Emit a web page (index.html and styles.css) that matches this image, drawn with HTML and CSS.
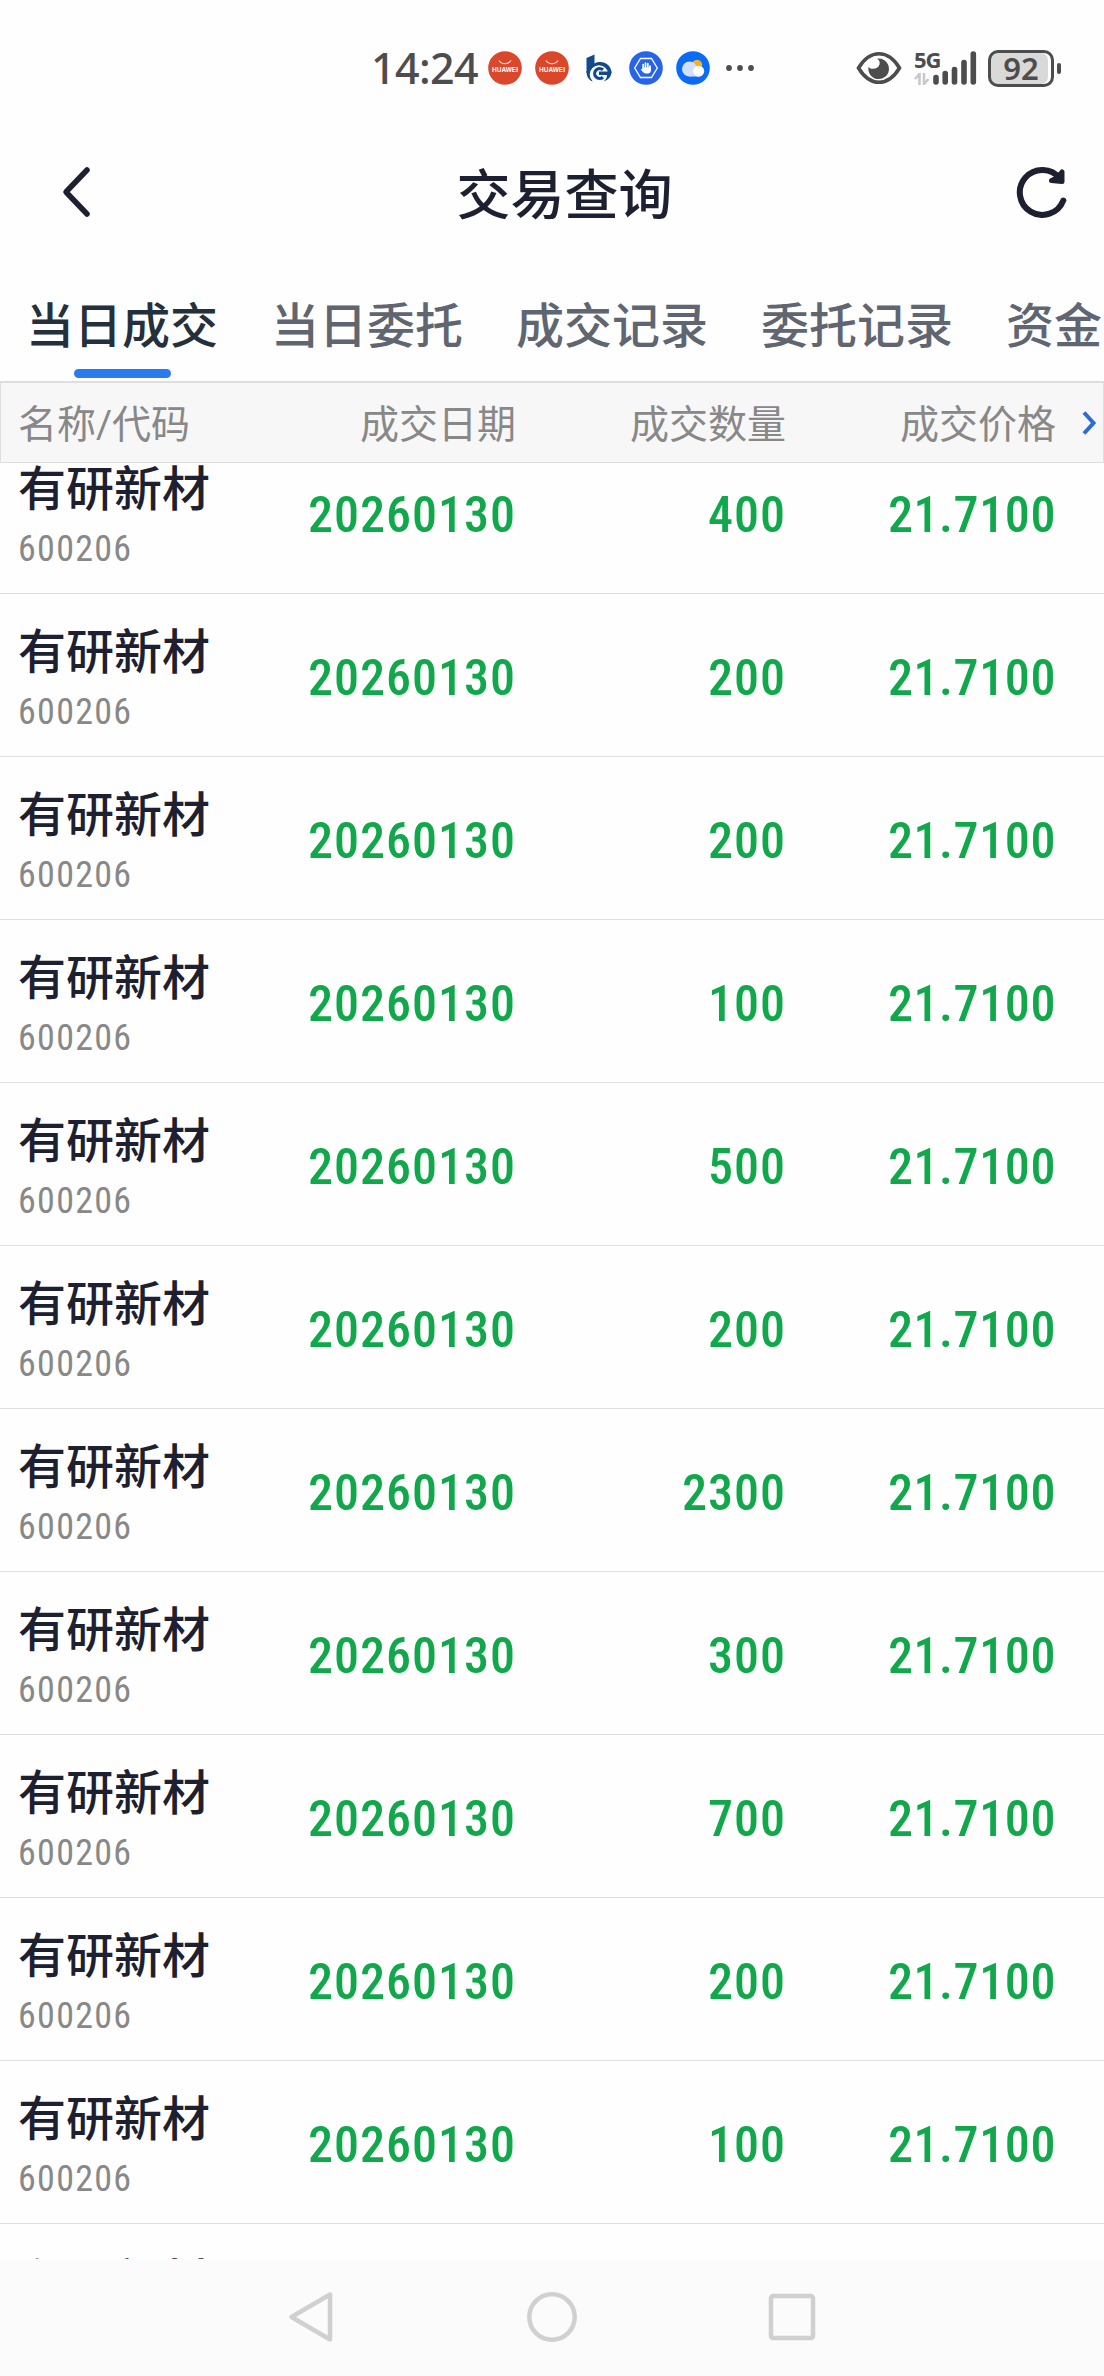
FILE: index.html
```
<!DOCTYPE html>
<html lang="zh-CN">
<head>
  <meta charset="UTF-8">
  <meta name="viewport" content="width=device-width, initial-scale=1.0">
  <title>交易查询</title>
  <link rel="stylesheet" href="styles.css">
</head>
<body>
  <div class="status-bar">
    <span class="clock">14:24</span>
    <div class="app-icons">
      <svg class="app-icon" viewBox="0 0 34 34">
        <circle cx="17" cy="17" r="16.8" fill="#db472b"/>
        <path d="M11 9.5c2.5 4.2 9.5 4.2 12 0" fill="none" stroke="#fbd9d0" stroke-width="1.3"/>
        <text class="brand" x="17" y="21" text-anchor="middle" textLength="26" lengthAdjust="spacingAndGlyphs">HUAWEI</text>
      </svg>
      <svg class="app-icon" viewBox="0 0 34 34">
        <circle cx="17" cy="17" r="16.8" fill="#db472b"/>
        <path d="M11 9.5c2.5 4.2 9.5 4.2 12 0" fill="none" stroke="#fbd9d0" stroke-width="1.3"/>
        <text class="brand" x="17" y="21" text-anchor="middle" textLength="26" lengthAdjust="spacingAndGlyphs">HUAWEI</text>
      </svg>
      <svg class="app-icon" viewBox="0 0 34 34">
        <path d="M4.500 7L12.500 3.500V12.500C20 8.500 29.500 13 29.500 22H4.500Z" fill="#124a8c"/>
        <path d="M4.500 20C4.500 25 6 28.500 10.500 30.500L12 22Z" fill="#124a8c"/>
        <circle cx="17" cy="23.500" r="9.300" fill="#fefefe"/>
        <path d="M21 18.800A5 5 0 1 0 21 26.200" fill="none" stroke="#124a8c" stroke-width="3.200"/>
        <path d="M17 20.500H29.500C29.500 25.500 26.500 29 21.500 30.500C24 28.500 25 26.500 25 24H17Z" fill="#124a8c"/>
      </svg>
      <svg class="app-icon" viewBox="0 0 34 34">
        <circle cx="17" cy="17" r="16.800" fill="#2864e8"/>
        <path d="M11.500 7.500h11l5.800 9.500l-5.800 9.500h-11l-5.800-9.500z" fill="none" stroke="#fff" stroke-width="1.300"/>
        <path d="M14.200 18v-4.500M16.500 18v-6M18.800 18v-5.500M21 19v-4" stroke="#fff" stroke-width="1.700" stroke-linecap="round"/>
        <path d="M13.400 16.500h8.500v3c0 2-1.400 3-3 3h-1.800c-1.800 0-3.400-1.500-5.300-4c.5-.8 1.300-.5 1.900.2z" fill="#fff"/>
      </svg>
      <svg class="app-icon" viewBox="0 0 34 34">
        <circle cx="17" cy="17" r="16.800" fill="#0a6cf5"/>
        <circle cx="21" cy="14" r="5.200" fill="#f8b31c"/>
        <circle cx="13.500" cy="18" r="7.500" fill="#d4e0fb"/>
        <path d="M13 20h10v5.500H13z" fill="#d4e0fb"/>
        <circle cx="22.700" cy="20.200" r="5.500" fill="#fff"/>
      </svg>
    </div>
    <svg class="more" viewBox="0 0 30 8">
      <circle cx="4" cy="4" r="2.900"/><circle cx="15" cy="4" r="2.900"/><circle cx="26" cy="4" r="2.900"/>
    </svg>
    <svg class="eye" viewBox="0 0 46 34">
      <path d="M2.500 17C14-2 32-2 43.500 17C32 36 14 36 2.500 17Z" fill="none" stroke="#4d4d4d" stroke-width="3.600"/>
      <path d="M23 7.500A10.300 10.300 0 1 1 12.500 16C15 19 22 18.500 23.500 13.500C24 11 23.500 9 21 7.800Z" fill="#4d4d4d"/>
    </svg>
    <div class="network">
      <span>5G</span>
      <svg viewBox="0 0 16 12">
        <path d="M5.500 12V1L1 6M10 0V11L14.500 6" fill="none" stroke="#c9c9c9" stroke-width="2.600"/>
      </svg>
    </div>
    <svg class="signal" viewBox="0 0 44 34">
      <path d="M3 26.500V31M12.200 22.500V31M21.500 18.500V31M31 11.500V31M40.300 3V31" stroke="#4d4d4d" stroke-width="5.600" stroke-linecap="round"/>
    </svg>
    <div class="battery">92</div>
    <div class="battery-tip"></div>
  </div>

  <header>
    <svg class="back" viewBox="0 0 30 52">
      <path d="M26 4L5 26L26 48" fill="none" stroke="#1d2030" stroke-width="5.500" stroke-linecap="round" stroke-linejoin="round"/>
    </svg>
    <h1>交易查询</h1>
    <svg class="refresh" viewBox="0 0 52 52">
      <path d="M48.300 34.500A22.500 22.500 0 1 1 45 12.500" fill="none" stroke="#1d2030" stroke-width="6" stroke-linecap="round"/>
      <path d="M47 6V15.500L36.500 14.500L42 12Z" fill="#1d2030" stroke="#1d2030" stroke-width="5" stroke-linejoin="round"/>
    </svg>
  </header>

  <nav class="tabs">
    <a class="active">当日成交</a>
    <a>当日委托</a>
    <a>成交记录</a>
    <a>委托记录</a>
    <a>资金流水</a>
  </nav>

  <div class="table-head">
    <span>名称/代码</span>
    <span>成交日期</span>
    <span>成交数量</span>
    <span>成交价格</span>
    <svg viewBox="0 0 16 24">
      <path d="M3 1.500L12.500 12L3 22.500" fill="none" stroke="#2a6fd0" stroke-width="4"/>
    </svg>
  </div>

  <main>
    <div class="row">
      <div class="stock"><b>有研新材</b><small>600206</small></div>
      <span>20260130</span><span>400</span><span>21.7100</span>
    </div>
    <div class="row">
      <div class="stock"><b>有研新材</b><small>600206</small></div>
      <span>20260130</span><span>200</span><span>21.7100</span>
    </div>
    <div class="row">
      <div class="stock"><b>有研新材</b><small>600206</small></div>
      <span>20260130</span><span>200</span><span>21.7100</span>
    </div>
    <div class="row">
      <div class="stock"><b>有研新材</b><small>600206</small></div>
      <span>20260130</span><span>100</span><span>21.7100</span>
    </div>
    <div class="row">
      <div class="stock"><b>有研新材</b><small>600206</small></div>
      <span>20260130</span><span>500</span><span>21.7100</span>
    </div>
    <div class="row">
      <div class="stock"><b>有研新材</b><small>600206</small></div>
      <span>20260130</span><span>200</span><span>21.7100</span>
    </div>
    <div class="row">
      <div class="stock"><b>有研新材</b><small>600206</small></div>
      <span>20260130</span><span>2300</span><span>21.7100</span>
    </div>
    <div class="row">
      <div class="stock"><b>有研新材</b><small>600206</small></div>
      <span>20260130</span><span>300</span><span>21.7100</span>
    </div>
    <div class="row">
      <div class="stock"><b>有研新材</b><small>600206</small></div>
      <span>20260130</span><span>700</span><span>21.7100</span>
    </div>
    <div class="row">
      <div class="stock"><b>有研新材</b><small>600206</small></div>
      <span>20260130</span><span>200</span><span>21.7100</span>
    </div>
    <div class="row">
      <div class="stock"><b>有研新材</b><small>600206</small></div>
      <span>20260130</span><span>100</span><span>21.7100</span>
    </div>
    <div class="row">
      <div class="stock"><b>有研新材</b><small>600206</small></div>
    </div>
  </main>

  <footer>
    <svg viewBox="0 0 54 54"><path d="M45 4.500V49.500L6.500 27Z"/></svg>
    <svg viewBox="0 0 54 54"><circle cx="27" cy="27" r="22.700"/></svg>
    <svg viewBox="0 0 54 54"><rect x="6" y="6" width="42" height="42" rx="2"/></svg>
  </footer>
</body>
</html>
```
FILE: styles.css
```
* {
  box-sizing: border-box;
}
body {
  margin: 0;
  height: 2376px;
  display: flex;
  flex-direction: column;
  overflow: hidden;
  background-color: #fefefe;
  color: #1d2030;
  font-family: Roboto, "Noto Sans CJK SC", sans-serif;
}
svg {
  display: block;
  flex: none;
}

/* status bar */
.status-bar {
  height: 136px;
  flex: none;
  display: flex;
  align-items: center;
  padding-left: 371px;
  color: #4d4d4d;
}
.clock {
  width: 117px;
  font: 500 43px/50px "Noto Sans", sans-serif;
  letter-spacing: -0.6px;
  white-space: nowrap;
}
.app-icons {
  display: flex;
  gap: 13px;
}
.app-icon {
  width: 34px;
  height: 34px;
}
.brand {
  font: bold 6.5px "Liberation Sans", sans-serif;
  fill: #fff;
}
.more {
  width: 30px;
  height: 8px;
  margin-left: 15px;
  fill: #4d4d4d;
}
.eye {
  width: 46px;
  height: 34px;
  margin-left: 101px;
}
.network {
  width: 19px;
  height: 34px;
  margin-left: 12px;
}
.network span {
  display: block;
  height: 22px;
  font: 700 22px/17px "Noto Sans", sans-serif;
  font-stretch: 75%;
  letter-spacing: -1px;
}
.network svg {
  width: 16px;
  height: 12px;
}
.signal {
  width: 44px;
  height: 34px;
}
.battery {
  width: 66px;
  height: 37px;
  margin-left: 11px;
  border: 3px solid #4d4d4d;
  border-radius: 10px;
  background: #d9d9d9;
  box-shadow: inset -3px 0 #fff;
  text-align: center;
  font: 600 31px/31px "Noto Sans", sans-serif;
}
.battery-tip {
  width: 4px;
  height: 11px;
  margin-left: 3px;
  border-radius: 2px;
  background: #4d4d4d;
}

/* title */
header {
  height: 112px;
  flex: none;
  display: flex;
  justify-content: space-between;
  align-items: center;
  padding: 0 37px 0 61px;
}
h1 {
  margin: 10px 0 0 23px;
  font-size: 54px;
  font-weight: 500;
  line-height: 60px;
}
.back {
  width: 30px;
  height: 52px;
}
.refresh {
  width: 52px;
  height: 52px;
}

.tabs {
  height: 133px;
  flex: none;
  display: flex;
  gap: 53px;
  padding: 44px 0 3px 26px;
  overflow: hidden;
  white-space: nowrap;
  font-size: 48px;
  font-weight: 500;
  line-height: 70px;
  color: #5f6672;
}
.tabs a {
  display: flex;
  flex-direction: column;
  justify-content: space-between;
  align-items: center;
}
.tabs .active {
  color: #24303c;
}
.tabs .active::after {
  content: "";
  width: 97px;
  height: 9px;
  border-radius: 5px;
  background: #2b7bf0;
}

/* list */
.table-head,
.row {
  display: grid;
  grid-template-columns: 244px 271px 270px 270px 1fr;
  align-items: center;
}
.table-head {
  height: 82px;
  flex: none;
  border: 1px solid #dedede;
  border-top-width: 2px;
  background: #f7f7f7;
  color: #888;
  font-size: 39px;
  line-height: 58px;
}
.table-head span {
  padding-top: 4px;
  text-align: right;
}
.table-head span:first-child {
  padding-left: 17px;
  text-align: left;
}
.table-head svg {
  width: 16px;
  height: 24px;
  margin-left: 25px;
}
main {
  flex: 1;
  min-height: 0;
  overflow: hidden;
}
.row {
  height: 163px;
  border-bottom: 1px solid #e0e0e0;
  font-size: 50px;
  font-weight: 500;
  font-stretch: 87%;
  color: #10a84a;
}
.row:first-child {
  margin-top: -32px;
}
.row span {
  margin-right: -1px;
  padding-top: 6px;
  text-align: right;
  line-height: 60px;
  letter-spacing: 1px;
}
.row span:last-child {
  letter-spacing: 0.6px;
}
.stock {
  padding: 2px 0 0 18px;
  white-space: nowrap;
}
.stock b {
  display: block;
  font-size: 48px;
  font-weight: 500;
  line-height: 72px;
  color: #1d2030;
}
.stock small {
  display: block;
  font-size: 36px;
  font-weight: 400;
  line-height: 47px;
  letter-spacing: 1.3px;
  color: #888;
}

/* system keys */
footer {
  height: 117px;
  flex: none;
  display: flex;
  justify-content: center;
  gap: 186px;
  padding-top: 31px;
  background: #fbfbfb;
}
footer svg {
  width: 54px;
  height: 54px;
  fill: none;
  stroke: #d0d0d0;
  stroke-width: 4.5;
  stroke-linejoin: round;
}
```
